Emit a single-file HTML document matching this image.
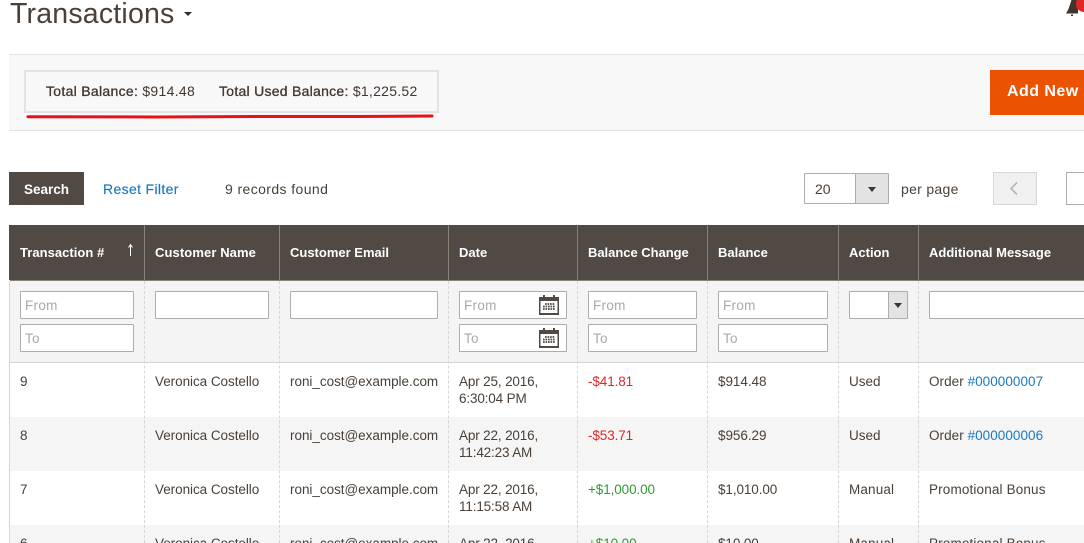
<!DOCTYPE html>
<html><head><meta charset="utf-8"><title>Transactions</title>
<style>
html{margin:0;padding:0;background:#fff;width:1084px;height:543px;overflow:hidden}
body{margin:0;padding:0;background:#fff;width:1084px;height:543px;overflow:hidden;position:relative;font-family:"Liberation Sans",sans-serif;color:#41362f}
div,span.t,a{position:absolute}
#w{left:0;top:0;width:1084px;height:543px;overflow:hidden}
.t{white-space:nowrap;font-size:13.5px;line-height:17px;letter-spacing:0;color:#4a4038}
.b{font-weight:700;color:#fff;letter-spacing:0;font-size:13px}
.d{letter-spacing:-.15px}
.n{letter-spacing:-.05px}
.m{letter-spacing:.15px}
.o{letter-spacing:.05px}
.i{box-sizing:border-box;height:28px;background:#fff;border:1px solid #adadad;border-radius:1px}
.p{color:#a9a9a9;font-size:13.5px;line-height:17px;letter-spacing:.3px;white-space:nowrap}
.v{width:0;top:281px;height:262px;border-left:1px dashed #d6d6d6}
.h{width:1px;top:225px;height:55px;background:#8a8178}
.l{color:#1979c3}
svg{position:absolute}
</style></head><body><div id="w">
<span class="t" style="left:10px;top:-4px;font-size:28.5px;line-height:36px;letter-spacing:.2px">Transactions</span>
<div style="left:184px;top:12px;width:0;height:0;border:4px solid transparent;border-top:4px solid #303030;border-bottom:0"></div>
<svg style="left:1064px;top:0" width="20" height="17" viewBox="0 0 20 17"><path d="M2 13.5 L4.5 9 L7.5 0 H14 V13.5 Z" fill="#41362f"/><rect x="7" y="14.5" width="2" height="1.5" fill="#41362f"/><circle cx="20" cy="4" r="8" fill="#e22626"/></svg>

<div style="left:9px;top:54px;width:1075px;height:75px;background:#f8f8f8;border-top:1px solid #e3e3e3;border-bottom:1px solid #e3e3e3"></div>
<div style="left:24px;top:70px;width:411px;height:39px;border:2px solid #e3e3e3"></div>
<span class="t" style="left:46px;top:83px;font-size:14px;letter-spacing:.3px;color:#41362f"><b style="font-weight:400;-webkit-text-stroke:.3px #41362f">Total Balance:</b> $914.48</span>
<span class="t" style="left:219px;top:83px;font-size:14px;letter-spacing:.27px;color:#41362f"><b style="font-weight:400;-webkit-text-stroke:.3px #41362f">Total Used Balance:</b> $1,225.52</span>
<svg style="left:26px;top:113px" width="410" height="7"><path d="M2 3.7 L130 4 L230 3.5 L330 3.5 L406 3" stroke="#e8101a" stroke-width="3" fill="none" stroke-linecap="round"/></svg>
<div style="left:990px;top:70px;width:94px;height:45px;background:#eb5202"></div>
<span class="t b" style="left:1007px;top:83px;font-size:16px;line-height:18px;letter-spacing:.45px">Add New</span>

<div style="left:9px;top:172px;width:75px;height:33px;background:#514943"></div>
<span class="t b" style="left:24px;top:181px;font-size:13.5px">Search</span>
<span class="t l" style="left:103px;top:181px;font-size:14px;letter-spacing:.35px;-webkit-text-stroke:.15px #1979c3">Reset Filter</span>
<span class="t" style="left:225px;top:181px;font-size:14px;letter-spacing:.4px">9 records found</span>
<div style="left:804px;top:173px;width:85px;height:31px;box-sizing:border-box;background:#fff;border:1px solid #adadad;border-radius:1px"></div>
<div style="left:855px;top:174px;width:33px;height:29px;background:#e3e3e3;border-left:1px solid #adadad;box-sizing:border-box"></div>
<div style="left:868px;top:187px;width:0;height:0;border:4px solid transparent;border-top:5px solid #41362f;border-bottom:0"></div>
<span class="t" style="left:815px;top:181px;font-size:14px">20</span>
<span class="t" style="left:901px;top:181px;font-size:14px;letter-spacing:.3px">per page</span>
<div style="left:993px;top:172px;width:44px;height:33px;box-sizing:border-box;background:#f0f0f0;border:1px solid #d6d6d6"></div>
<svg style="left:1008px;top:181px" width="12" height="15"><path d="M9 1.5 L3 7.5 L9 13.5" stroke="#b5b5b5" stroke-width="1.6" fill="none"/></svg>
<div style="left:1066px;top:172px;width:30px;height:33px;box-sizing:border-box;background:#fff;border:1px solid #adadad"></div>

<div style="left:9px;top:225px;width:1075px;height:55px;background:#514943"></div>
<div class="h" style="left:144px"></div><div class="h" style="left:279px"></div><div class="h" style="left:448px"></div><div class="h" style="left:577px"></div><div class="h" style="left:707px"></div><div class="h" style="left:838px"></div><div class="h" style="left:918px"></div>
<div style="left:10px;top:280px;width:1074px;height:82px;background:#f4f4f4;border-top:1px solid #8a8178;box-sizing:content-box"></div>
<div style="left:10px;top:417px;width:1074px;height:54px;background:#f5f5f5"></div>
<div style="left:10px;top:525px;width:1074px;height:18px;background:#f5f5f5"></div>
<div style="left:10px;top:362px;width:1074px;height:1px;background:#d6d6d6"></div>
<div style="left:9px;top:281px;width:1px;height:262px;background:#d6d6d6"></div>
<div class="v" style="left:144px"></div><div class="v" style="left:279px"></div><div class="v" style="left:448px"></div><div class="v" style="left:577px"></div><div class="v" style="left:707px"></div><div class="v" style="left:838px"></div><div class="v" style="left:918px"></div>

<span class="t b" style="left:20px;top:244px;letter-spacing:.03px">Transaction #</span>
<svg style="left:126px;top:243px" width="9" height="14"><path d="M4.5 2 V13 M2.5 4.5 L4.5 1.5 L6.5 4.5" stroke="#fff" stroke-width="1" fill="none"/></svg>
<span class="t b" style="left:155px;top:244px;letter-spacing:.1px">Customer Name</span>
<span class="t b" style="left:290px;top:244px">Customer Email</span>
<span class="t b" style="left:459px;top:244px">Date</span>
<span class="t b" style="left:588px;top:244px;letter-spacing:-.03px">Balance Change</span>
<span class="t b" style="left:718px;top:244px">Balance</span>
<span class="t b" style="left:849px;top:244px">Action</span>
<span class="t b" style="left:929px;top:244px">Additional Message</span>

<div class="i" style="left:20px;top:291px;width:114px"></div><span class="t p" style="left:25px;top:297px">From</span>
<div class="i" style="left:20px;top:324px;width:114px"></div><span class="t p" style="left:25px;top:330px">To</span>
<div class="i" style="left:155px;top:291px;width:114px"></div>
<div class="i" style="left:290px;top:291px;width:148px"></div>
<div class="i" style="left:459px;top:291px;width:108px"></div><span class="t p" style="left:464px;top:297px">From</span>
<div class="i" style="left:459px;top:324px;width:108px"></div><span class="t p" style="left:464px;top:330px">To</span>
<svg style="left:539px;top:295px" width="20" height="20" viewBox="0 0 20 20"><rect x="0" y="2" width="20" height="18" fill="#514943"/><rect x="1.5" y="6" width="17" height="12" fill="#fff"/><rect x="4" y="0" width="2" height="5" fill="#514943"/><rect x="14" y="0" width="2" height="5" fill="#514943"/><path d="M6 9h10M4 11.5h12M4 14h12" stroke="#514943" stroke-width="1.7" stroke-dasharray="1.7 .8"/></svg>
<svg style="left:539px;top:328px" width="20" height="20" viewBox="0 0 20 20"><rect x="0" y="2" width="20" height="18" fill="#514943"/><rect x="1.5" y="6" width="17" height="12" fill="#fff"/><rect x="4" y="0" width="2" height="5" fill="#514943"/><rect x="14" y="0" width="2" height="5" fill="#514943"/><path d="M6 9h10M4 11.5h12M4 14h12" stroke="#514943" stroke-width="1.7" stroke-dasharray="1.7 .8"/></svg>
<div class="i" style="left:588px;top:291px;width:109px"></div><span class="t p" style="left:593px;top:297px">From</span>
<div class="i" style="left:588px;top:324px;width:109px"></div><span class="t p" style="left:593px;top:330px">To</span>
<div class="i" style="left:718px;top:291px;width:110px"></div><span class="t p" style="left:723px;top:297px">From</span>
<div class="i" style="left:718px;top:324px;width:110px"></div><span class="t p" style="left:723px;top:330px">To</span>
<div class="i" style="left:849px;top:291px;width:59px"></div>
<div style="left:888px;top:292px;width:19px;height:26px;box-sizing:border-box;background:#e3e3e3;border-left:1px solid #adadad"></div>
<div style="left:894px;top:303px;width:0;height:0;border:4px solid transparent;border-top:5px solid #41362f;border-bottom:0"></div>
<div class="i" style="left:929px;top:291px;width:160px"></div>

<span class="t" style="left:20px;top:373px">9</span><span class="t n" style="left:155px;top:373px">Veronica Costello</span><span class="t" style="left:290px;top:373px;letter-spacing:-.03px">roni_cost@example.com</span><span class="t d" style="left:459px;top:373px">Apr 25, 2016,</span><span class="t d" style="left:459px;top:390px">6:30:04 PM</span><span class="t" style="left:588px;top:373px;color:#e22626;letter-spacing:-.1px">-$41.81</span><span class="t" style="left:718px;top:373px;letter-spacing:-.05px">$914.48</span><span class="t" style="left:849px;top:373px">Used</span><span class="t o" style="left:929px;top:373px">Order <span class="l">#000000007</span></span>

<span class="t" style="left:20px;top:427px">8</span><span class="t n" style="left:155px;top:427px">Veronica Costello</span><span class="t" style="left:290px;top:427px;letter-spacing:-.03px">roni_cost@example.com</span><span class="t d" style="left:459px;top:427px">Apr 22, 2016,</span><span class="t d" style="left:459px;top:444px">11:42:23 AM</span><span class="t" style="left:588px;top:427px;color:#e22626;letter-spacing:-.1px">-$53.71</span><span class="t" style="left:718px;top:427px;letter-spacing:-.05px">$956.29</span><span class="t" style="left:849px;top:427px">Used</span><span class="t o" style="left:929px;top:427px">Order <span class="l">#000000006</span></span>

<span class="t" style="left:20px;top:481px">7</span><span class="t n" style="left:155px;top:481px">Veronica Costello</span><span class="t" style="left:290px;top:481px;letter-spacing:-.03px">roni_cost@example.com</span><span class="t d" style="left:459px;top:481px">Apr 22, 2016,</span><span class="t d" style="left:459px;top:498px">11:15:58 AM</span><span class="t" style="left:588px;top:481px;color:#2f9e2f;letter-spacing:-.1px">+$1,000.00</span><span class="t" style="left:718px;top:481px;letter-spacing:-.1px">$1,010.00</span><span class="t m" style="left:849px;top:481px">Manual</span><span class="t m" style="left:929px;top:481px">Promotional Bonus</span>

<span class="t" style="left:20px;top:535px">6</span><span class="t n" style="left:155px;top:535px">Veronica Costello</span><span class="t" style="left:290px;top:535px;letter-spacing:-.03px">roni_cost@example.com</span><span class="t d" style="left:459px;top:535px">Apr 22, 2016,</span><span class="t" style="left:588px;top:535px;color:#2f9e2f;letter-spacing:-.1px">+$10.00</span><span class="t" style="left:718px;top:535px;letter-spacing:-.1px">$10.00</span><span class="t m" style="left:849px;top:535px">Manual</span><span class="t m" style="left:929px;top:535px">Promotional Bonus</span>
</div></body></html>
